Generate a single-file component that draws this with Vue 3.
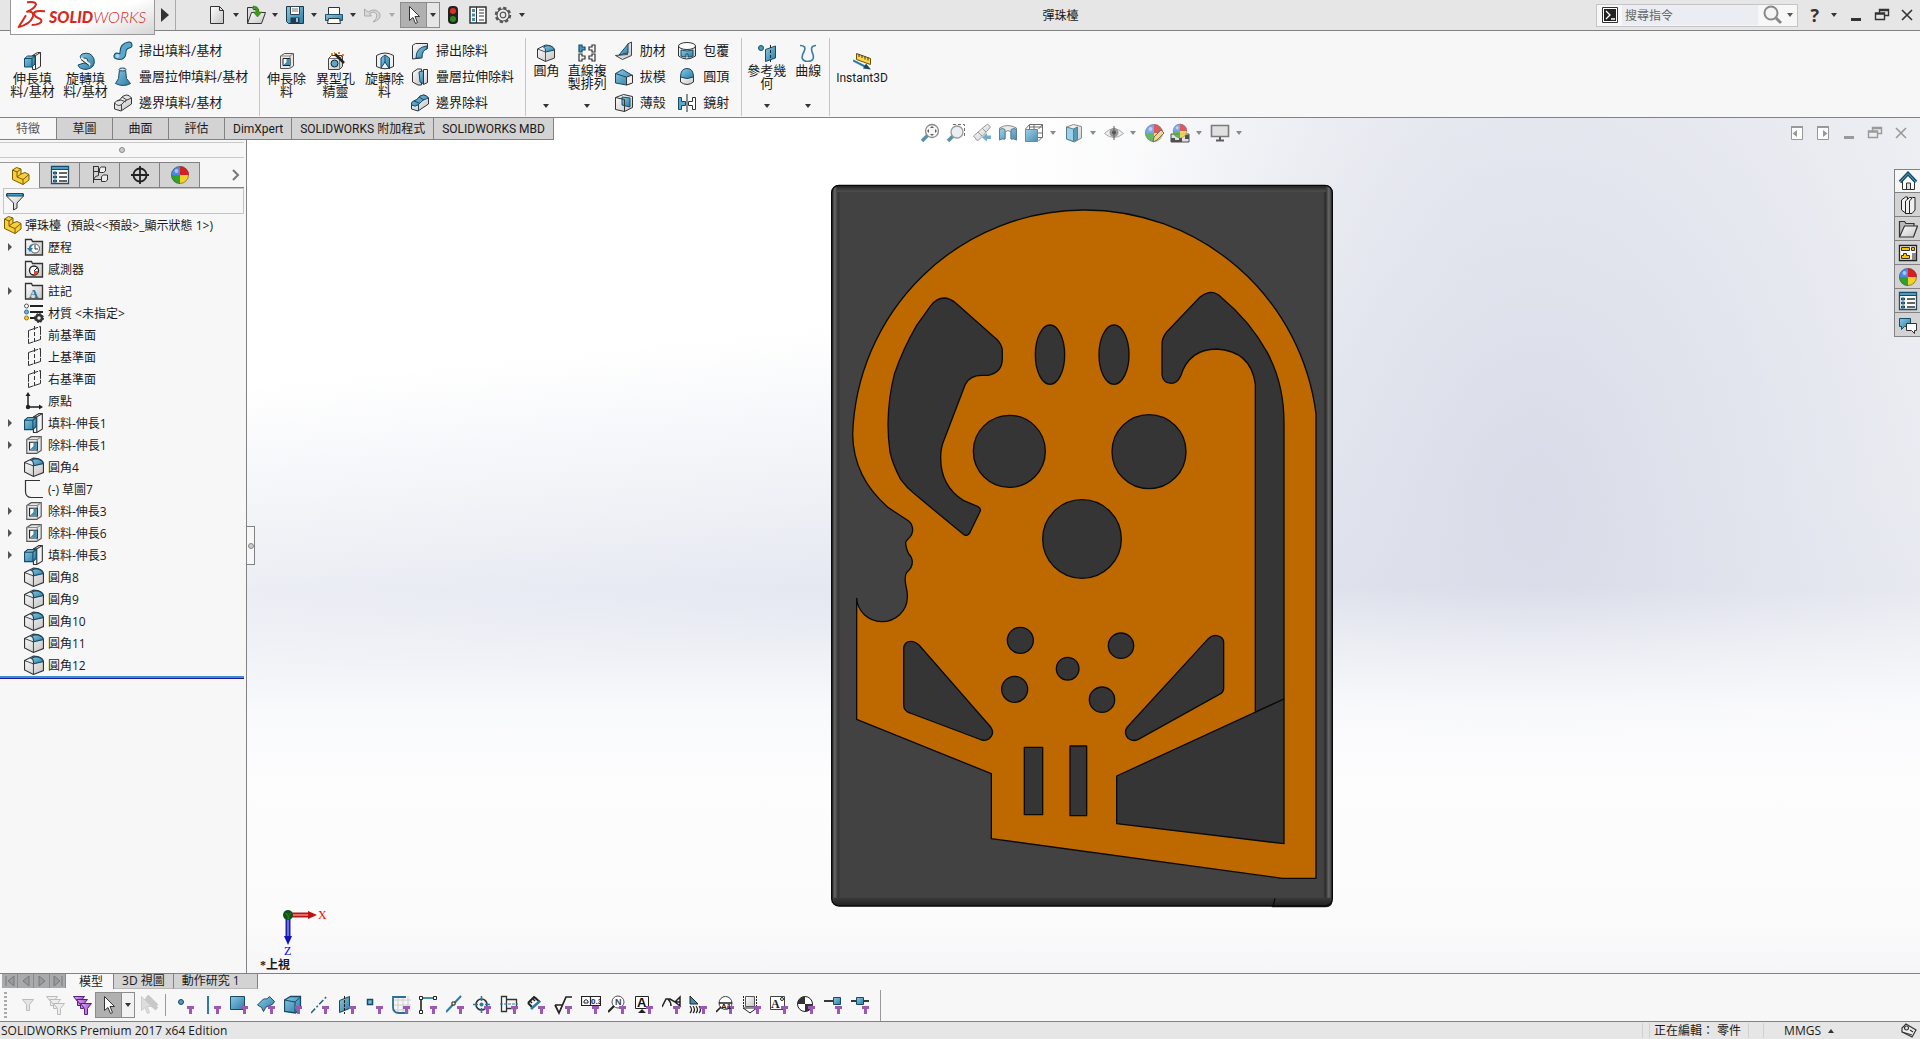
<script setup>
import { h } from 'vue'

// Lettering that sits on top of an icon: x, y, size, text, family
const serif = 'Liberation Serif, serif'
const sans = 'Liberation Sans, sans-serif'
const letters = {
  annot: [5, 17, 13, 'A', serif, '#2b6f94'],
  'f-tol': [10, 9, 8, '0.3', sans, '#222'],
  'f-note': [7, 10, 9, 'N', sans, '#444'],
  'f-datum': [2, 12, 13, 'A', sans, '#111'],
  'f-dtarget': [5, 14, 8, 'A1', sans, '#222'],
  'f-block': [1, 13, 12, 'A', serif, '#222'],
}

// Renders one symbol from the sprite at the end of the template
const Ic = (p) => {
  const t = letters[p.n]
  const kids = [h('use', { href: '#' + p.n })]
  if (t) kids.push(h('text', { x: t[0], y: t[1], 'font-size': t[2], 'font-family': t[4], 'font-weight': 700, fill: t[5] }, t[3]))
  return h('svg', { width: p.s || 18, height: p.s || 18, viewBox: '0 0 20 20', 'aria-hidden': 'true' }, kids)
}
Ic.props = ['n', 's']

const quick = [
  { n: 'new', t: '開新檔案' }, { n: 'open', t: '開啟' }, { n: 'save', t: '儲存' },
  { n: 'print', t: '列印' }, { n: 'undo', t: '復原', dim: true },
]

const ribbon = [
  {
    big: [{ n: 'boss', l: ['伸長填', '料/基材'] }, { n: 'revolve', l: ['旋轉填', '料/基材'] }],
    cols: [[{ n: 'sweep', l: '掃出填料/基材' }, { n: 'loft', l: '疊層拉伸填料/基材' }, { n: 'boundary', l: '邊界填料/基材' }]],
    c: 'g1',
  },
  {
    big: [{ n: 'cut', l: ['伸長除', '料'] }, { n: 'hole', l: ['異型孔', '精靈'] }, { n: 'revcut', l: ['旋轉除', '料'] }],
    cols: [[{ n: 'sweepcut', l: '掃出除料' }, { n: 'loftcut', l: '疊層拉伸除料' }, { n: 'boundcut', l: '邊界除料' }]],
    c: 'g2',
  },
  {
    big: [{ n: 'fillet', l: ['圓角'], d: 1 }, { n: 'pattern', l: ['直線複', '製排列'], d: 1 }],
    cols: [
      [{ n: 'rib', l: '肋材' }, { n: 'draft', l: '拔模' }, { n: 'shell', l: '薄殼' }],
      [{ n: 'wrap', l: '包覆' }, { n: 'dome', l: '圓頂' }, { n: 'mirror', l: '鏡射' }],
    ],
    c: 'g3',
  },
  { big: [{ n: 'refgeo', l: ['參考幾', '何'], d: 1 }, { n: 'curves', l: ['曲線'], d: 1 }], cols: [], c: 'g4' },
  { big: [{ n: 'instant', l: ['Instant3D'] }], cols: [], c: 'g5' },
]

const cmTabs = ['特徵', '草圖', '曲面', '評估', 'DimXpert', 'SOLIDWORKS 附加程式', 'SOLIDWORKS MBD']
const fmTabs = [
  { n: 'part', t: '特徵管理員' }, { n: 'props', t: '屬性' }, { n: 'config', t: '模型組態' },
  { n: 'target', t: 'DimXpert' }, { n: 'ball', t: '顯示' },
]

const tree = [
  { n: 'history', l: '歷程', a: 1 }, { n: 'sensor', l: '感測器' }, { n: 'annot', l: '註記', a: 1 },
  { n: 'material', l: '材質 <未指定>' }, { n: 'plane', l: '前基準面' }, { n: 'plane', l: '上基準面' },
  { n: 'plane', l: '右基準面' }, { n: 'origin', l: '原點' }, { n: 'boss', l: '填料-伸長1', a: 1 },
  { n: 'cut', l: '除料-伸長1', a: 1 }, { n: 'fillet', l: '圓角4' }, { n: 'sketch', l: '(-) 草圖7' },
  { n: 'cut', l: '除料-伸長3', a: 1 }, { n: 'cut', l: '除料-伸長6', a: 1 }, { n: 'boss', l: '填料-伸長3', a: 1 },
  { n: 'fillet', l: '圓角8' }, { n: 'fillet', l: '圓角9' }, { n: 'fillet', l: '圓角10' },
  { n: 'fillet', l: '圓角11' }, { n: 'fillet', l: '圓角12' },
]

const heads = [
  { n: 'zoomfit' }, { n: 'zoomarea' }, { n: 'prevview' }, { n: 'section' }, { n: 'orient', d: 1 },
  { n: 'display', d: 1 }, { n: 'eye', d: 1 }, { n: 'appear' }, { n: 'scene', d: 1 }, { n: 'monitor', d: 1 },
]
const docBtns = ['dockl', 'dockr', 'min', 'restore', 'close']
const winBtns = ['min', 'restore', 'close']
const tasks = ['home', 'library', 'folder', 'palette', 'ball', 'props', 'forum']
const filters = [
  'f-point', 'f-edge', 'f-face', 'f-surf', 'f-body', 'f-axis', 'f-plane', 'f-spt', 'f-sketch', 'f-seg', 'f-mid',
  'f-center', 'f-cline', 'f-dim', 'f-rough', 'f-tol', 'f-note', 'f-datum', 'f-weld', 'f-wsym', 'f-dtarget',
  'f-thread', 'f-block', 'f-com', 'f-conn', 'f-route',
]
</script>

<template>
  <div class="app">
    <header class="title">
      <div class="logo">
        <svg width="30" height="30" viewBox="0 0 90 90" fill="none" stroke="#d8281e" stroke-width="6" stroke-linejoin="round" aria-hidden="true">
          <path d="M33 7q26-4 27 6q-3 13-27 22q22-3 18 15q-10 24-43 31l22-35M87 34q-33-4-33 8q2 8 17 14q12 7-2 15q-8 4-22 4" />
        </svg>
        <span class="brand"><b>SOLID</b>WORKS</span>
      </div>
      <button class="fly" aria-label="功能表"><svg width="8" height="14"><path d="M0 0l8 7-8 7z" fill="#333" /></svg></button>
      <div class="quick">
        <div v-for="q in quick" :key="q.n" class="split" :class="{ dim: q.dim }">
          <button :aria-label="q.t"><Ic :n="q.n" s="20" /></button><i class="car"></i>
        </div>
        <div class="pick"><button aria-label="選擇"><Ic n="cursor" s="20" /></button><button aria-label="更多"><i class="car"></i></button></div>
        <button aria-label="重新計算"><Ic n="traffic" s="20" /></button>
        <button aria-label="檔案屬性"><Ic n="filelist" s="20" /></button>
        <button aria-label="選項"><Ic n="gear" s="20" /></button>
        <i class="car"></i>
      </div>
      <h1>彈珠檯</h1>
      <div class="tools">
        <div class="search">
          <Ic n="prompt" s="16" />
          <input type="text" placeholder="搜尋指令" aria-label="搜尋指令" />
          <Ic n="lens" s="20" /><i class="car"></i>
        </div>
        <button class="help">?</button><i class="car"></i>
        <button v-for="w in winBtns" :key="w" class="win" :aria-label="w"><Ic :n="w" s="16" /></button>
      </div>
    </header>

    <section class="ribbon">
      <div v-for="g in ribbon" :key="g.c" class="group" :class="g.c">
        <button v-for="b in g.big" :key="b.n" class="big" :class="{ drop: b.d }">
          <Ic :n="b.n" /><span v-for="t in b.l" :key="t">{{ t }}</span><i v-if="b.d" class="car"></i>
        </button>
        <div v-for="(c, i) in g.cols" :key="i" class="col">
          <button v-for="b in c" :key="b.n" class="small"><Ic :n="b.n" s="20" />{{ b.l }}</button>
        </div>
      </div>
    </section>

    <main class="work">
      <nav class="cmtabs">
        <button v-for="(t, i) in cmTabs" :key="t" :class="{ on: i === 0 }">{{ t }}</button>
      </nav>

      <aside class="panel">
        <div class="grip"><i></i></div>
        <div class="fmtabs">
          <button v-for="(t, i) in fmTabs" :key="t.n" :class="{ on: i === 0 }" :aria-label="t.t"><Ic :n="t.n" s="20" /></button>
          <span class="more"><svg width="8" height="12" fill="none" stroke="#777" stroke-width="2"><path d="M1 1l5 5-5 5" /></svg></span>
        </div>
        <label class="filter"><Ic n="funnel" s="20" /><input type="text" aria-label="篩選" /></label>
        <div class="root"><Ic n="part" s="20" /><span>彈珠檯&nbsp; (預設&lt;&lt;預設&gt;_顯示狀態 1&gt;)</span></div>
        <ul class="tree">
          <li v-for="(r, i) in tree" :key="i"><i :class="{ exp: r.a }"></i><Ic :n="r.n" s="20" /><span>{{ r.l }}</span></li>
        </ul>
        <div class="rollback"></div>
      </aside>

      <section class="view">
        <svg class="model" viewBox="33 39 1506 2172" role="img" aria-label="彈珠檯">
          <defs>
            <linearGradient id="mside"><stop offset="0" stop-color="#222" /><stop offset=".5" stop-color="#666" /><stop offset="1" stop-color="#333" /></linearGradient>
            <linearGradient id="mtop" x2="0" y2="1"><stop offset="0" stop-color="#1c1c1c" /><stop offset="1" stop-color="#4e4e4e" /></linearGradient>
            <linearGradient id="mbot" x2="0" y2="1"><stop offset="0" stop-color="#3a3a3a" /><stop offset="1" stop-color="#1e1e1e" /></linearGradient>
            <clipPath id="mclip"><rect x="35" y="42" width="1502" height="2164" rx="22" /></clipPath>
          </defs>
          <path d="M1358 2200h160q19 0 19-18v9q0 18-22 18h-160z" fill="#222" />
          <g clip-path="url(#mclip)">
            <path d="M35 42h1502v2164H35z" fill="#424242" />
            <path d="M54 62h5v2118h-5M1511 62h4v2118h-4z" fill="#373737" />
            <path d="M35 42h19v2164H35z" fill="url(#mside)" /><path d="M1515 42h22v2164h-22z" fill="url(#mside)" />
            <path d="M50 42h1468v20H50z" fill="url(#mtop)" /><path d="M40 2180h1492v26H40z" fill="url(#mbot)" />
            <path d="M1365 2182l-6 26" stroke="#000" stroke-width="3" />
          </g>
          <rect x="35" y="43" width="1502" height="2162" rx="22" fill="none" stroke="#080808" stroke-width="4" />
          <g stroke="#0a0a0a" stroke-width="4" stroke-linejoin="round">
            <path fill="#be6900" d="M98 790A696 696 0 0 1 790 117A700 700 0 0 1 1488 728V2122H1388L514 2003V1808L110 1645V1282A77 74 0 0 0 185 1352A77 74 0 0 0 262 1280Q263 1265 257 1240Q252 1213 262 1202Q277 1190 277 1172Q276 1158 266 1148Q260 1138 257 1118Q256 1112 264 1104Q278 1092 278 1076Q277 1058 266 1050L205 1010Q100 920 98 790z" />
            <g fill="#353535">
              <path d="M372 381Q350 382 333 403L290 463Q248 535 223 610Q205 680 204 760Q204 800 210 843Q218 880 242 925Q260 950 285 970L430 1090Q440 1098 449 1086L481 1020Q483 1013 474 1007L430 988Q362 945 362 860Q362 830 373 805L436 640Q450 613 485 613H505Q547 605 547 562V540Q546 520 530 505L408 397Q390 381 372 381z" />
              <path d="M1172 364Q1155 366 1140 378L1040 483Q1026 500 1026 520V612Q1030 637 1054 637Q1072 637 1082 615Q1107 534 1190 534Q1293 540 1306 640V1624L1392 1584V760Q1393 640 1342 545Q1290 450 1205 380Q1190 364 1172 364z" />
              <path d="M890 1815L1392 1584V2018L890 1958z" />
              <ellipse cx="690" cy="551" rx="44" ry="89" /><ellipse cx="882" cy="551" rx="45" ry="89" />
              <circle cx="568" cy="841" r="108" /><circle cx="987" cy="842" r="111" /><circle cx="786" cy="1104" r="118" />
              <circle cx="601" cy="1408" r="39" /><circle cx="903" cy="1424" r="38" /><circle cx="743" cy="1493" r="34" />
              <circle cx="584" cy="1555" r="39" /><circle cx="846" cy="1586" r="38" />
              <path d="M613 1729h55v202h-55zM750 1725h50v209h-50z" />
              <path d="M251 1435Q251 1411 273 1411Q285 1411 297 1422L512 1668Q520 1680 517 1690Q508 1712 485 1707L270 1626Q251 1620 251 1602z" />
              <path d="M1165 1403Q1175 1393 1187 1393Q1211 1396 1211 1415V1552Q1210 1565 1198 1570L955 1705Q938 1713 924 1702Q910 1685 922 1668z" />
            </g>
          </g>
        </svg>
        <div class="heads">
          <template v-for="b in heads" :key="b.n"><button :aria-label="b.n"><Ic :n="b.n" s="20" /></button><i v-if="b.d" class="car"></i></template>
        </div>
        <div class="docbtns"><button v-for="b in docBtns" :key="b" :aria-label="b"><Ic :n="b" s="16" /></button></div>
        <div class="tasks"><button v-for="(b, i) in tasks" :key="b" :class="{ on: i === 0 }" :aria-label="b"><Ic :n="b" s="20" /></button></div>
        <button class="handle" aria-label="收合"><i></i></button>
        <div class="triad">
          <svg width="46" height="48" aria-hidden="true">
            <path d="M8 6h20" stroke="#b01818" stroke-width="5" /><path d="M8 6h20" stroke="#e86a6a" stroke-width="2" /><path d="M26 2l9 4-9 4z" fill="#c01010" />
            <path d="M6 8v20" stroke="#2020a0" stroke-width="5" /><path d="M6 8v20" stroke="#6a6ae8" stroke-width="2" /><path d="M2 27l4 9 4-9z" fill="#1010c0" />
            <circle cx="6" cy="6" r="5" fill="#14501c" />
            <text x="3" y="10" fill="#1a9a1a" font-size="9" font-family="Liberation Serif, serif">Y</text>
            <text x="36" y="10" fill="#f00" font-size="12" font-family="Liberation Serif, serif">X</text>
            <text x="2" y="46" fill="#00f" font-size="12" font-family="Liberation Serif, serif">Z</text>
          </svg>
          <b>*上視</b>
        </div>
      </section>
    </main>

    <nav class="sheets">
      <div class="nav"><button v-for="n in ['first', 'prev', 'next', 'last']" :key="n" :aria-label="n"><Ic :n="n" s="12" /></button></div>
      <button class="on">模型</button><button>3D 視圖</button><button>動作研究 1</button>
    </nav>

    <section class="fbar">
      <i class="dots"></i>
      <button class="f1" aria-label="篩選"><Ic n="fun1" s="20" /></button>
      <button class="f1" aria-label="清除篩選"><Ic n="fun2" s="20" /></button>
      <button class="f1" aria-label="所有篩選"><Ic n="fun3" s="20" /></button>
      <div class="pick"><button aria-label="選擇"><Ic n="cursor" s="20" /></button><button aria-label="更多"><i class="car"></i></button></div>
      <button class="f1" aria-label="反轉選擇"><Ic n="inv" s="20" /></button>
      <i class="bar"></i>
      <div class="flist">
        <button v-for="f in filters" :key="f" :aria-label="f"><Ic :n="f" s="20" /></button>
      </div>
      <i class="bar end"></i>
    </section>

    <footer class="status">
      <span class="ed">SOLIDWORKS Premium 2017 x64 Edition</span>
      <span class="cell"></span>
      <span class="mode">正在編輯： 零件</span>
      <span class="cell wide"></span>
      <button class="unit">MMGS<i class="up"></i></button>
      <svg width="18" height="16" viewBox="0 0 18 16" fill="#eee" stroke="#333" stroke-width="1.2"><path d="M6 1l10 6-4 7L2 9V5z" /><circle cx="6.500" cy="5" r="2" /><path d="M10 7l3 2M2 9l10 3" /></svg>
    </footer>

    <svg class="sprite" aria-hidden="true">
      <defs>
        <linearGradient id="gb" x2="1" y2="1"><stop offset="0" stop-color="#8cc9e4" /><stop offset="1" stop-color="#2b7ca3" /></linearGradient>
        <linearGradient id="gg" x2="1" y2="1"><stop offset="0" stop-color="#fff" /><stop offset="1" stop-color="#c4c4c4" /></linearGradient>
        <linearGradient id="gf" x2="1"><stop offset="0" stop-color="#e0aaf5" /><stop offset="1" stop-color="#a050c8" /></linearGradient>
        <g id="fn"><path d="M11 11h7v3h-2v5h-3v-5h-2z" fill="#9b59b6" stroke="none" /></g>
      </defs>
      <!-- title bar -->
      <symbol id="new" viewBox="0 0 20 20"><path d="M3.500 1.500h9l4 4v13h-13z" fill="url(#gg)" stroke="#333" /><path d="M12.500 1.500v4h4" fill="none" stroke="#333" /></symbol>
      <symbol id="open" viewBox="0 0 20 20"><path d="M1.500 18.500v-16h5l1 2h5v4" fill="#ddd" stroke="#333" /><path d="M1.500 18.500l4-11h14l-4 11z" fill="url(#gg)" stroke="#333" /><path d="M7 1q6 0 6 6h3l-4.500 5L7 7h3q0-4-3-4z" fill="#3f9a1c" stroke="#2a6e10" stroke-width=".5" /></symbol>
      <symbol id="save" viewBox="0 0 20 20"><path d="M1.500 1.500h17v17h-15l-2-2z" fill="url(#gb)" stroke="#16394d" /><path d="M5.500 1.500h9v8h-9z" fill="#fff" stroke="#345" /><path d="M7 4h6M7 6h6" stroke="#777" /><path d="M5.500 12.500h9v6h-9z" fill="#1f3d4d" /><path d="M11 13h2v4h-2z" fill="#8cc9e4" /></symbol>
      <symbol id="print" viewBox="0 0 20 20"><path d="M4.500 2.500h11v7h-11z" fill="#fff" stroke="#333" /><path d="M1.500 9.500h17v6h-17z" fill="url(#gb)" stroke="#1c5270" /><path d="M4.500 13.500h11l1 5h-13z" fill="#fff" stroke="#333" /></symbol>
      <symbol id="undo" viewBox="0 0 20 20"><path d="M1.500 4v7h7L6.500 8.500Q12 5 14 10q0 4-4 7q8-2 7-8Q13 2 5 7z" fill="#d8d8d8" stroke="#aaa" /></symbol>
      <symbol id="cursor" viewBox="0 0 20 20"><path d="M5.500 1.500v14l3.500-3 2.500 6 2-1-2.500-6h4.500z" fill="#fff" stroke="#333" /></symbol>
      <symbol id="traffic" viewBox="0 0 20 20"><rect x="5" y="1" width="10" height="18" rx="4" fill="#222" /><circle cx="10" cy="6" r="3" fill="#e03020" /><circle cx="10" cy="14" r="3" fill="#2a8a20" /></symbol>
      <symbol id="filelist" viewBox="0 0 20 20"><path d="M2 2h16v16H2z" fill="#fff" stroke="#333" stroke-width="1.500" /><path d="M8.500 2v16M11 5h5M11 8h5M11 11h5M11 15h5" stroke="#333" /><path d="M4 4h3v3H4zM4 8.500h3v3H4zM4 13h3v3H4z" fill="#3f8fb5" /></symbol>
      <symbol id="gear" viewBox="0 0 20 20"><g fill="none" stroke="#555"><circle cx="10" cy="10" r="7" stroke-width="2.500" stroke-dasharray="3.200 2.300" /><circle cx="10" cy="10" r="6" fill="#f2f2f2" stroke-width="1.200" /><circle cx="10" cy="10" r="2.800" fill="#e6e6e6" stroke-width="1.200" /></g></symbol>
      <symbol id="prompt" viewBox="0 0 16 16"><path d="M.5.5h15v15H.5z" fill="#fff" stroke="#333" /><path d="M2 2h12v12H2z" fill="#222" /><path d="M4 4l4 4-4 4M9 12h4" fill="none" stroke="#fff" stroke-width="1.300" /></symbol>
      <symbol id="lens" viewBox="0 0 20 20"><circle cx="8" cy="8" r="6.500" fill="#f4f4f4" stroke="#888" stroke-width="2" /><path d="M13 13l5 5" stroke="#888" stroke-width="3" /></symbol>
      <symbol id="min" viewBox="0 0 16 16"><path d="M3 11h10v3H3z" fill="currentColor" /></symbol>
      <symbol id="restore" viewBox="0 0 16 16"><path d="M5.500 6V2.500h9v6h-4M1.500 6h9v6.500h-9zM1.500 7h9M5.500 3.500h9" fill="none" stroke="currentColor" stroke-width="1.400" /></symbol>
      <symbol id="close" viewBox="0 0 16 16"><path d="M3 3l10 10M13 3L3 13" stroke="currentColor" stroke-width="1.600" /></symbol>
      <symbol id="dockl" viewBox="0 0 16 16"><path d="M2.500 2v12.500h11V2z" fill="#fff" stroke="currentColor" /><path d="M2 1h12v2H2zM8 5v7L3.500 8.500z" fill="currentColor" /></symbol>
      <symbol id="dockr" viewBox="0 0 16 16"><path d="M2.500 2v12.500h11V2z" fill="#fff" stroke="currentColor" /><path d="M2 1h12v2H2zM8 5v7l4.500-3.500z" fill="currentColor" /></symbol>
      <!-- features -->
      <symbol id="boss" viewBox="0 0 18 18"><g stroke="#333" stroke-linejoin="round"><path d="M8.500 3.500l5-3h3v14l-5 3h-3z" fill="#f4f4f4" /><path d="M11.500 17V3.500l5-3M8.500 3.500h3" fill="none" /><path d="M.5 6.500l3-2.500h7.500v8l-3 3H.5z" fill="url(#gb)" stroke="#174a66" /><path d="M.5 6.500H8V15M8 6.500L11 4" fill="none" stroke="#174a66" /></g></symbol>
      <symbol id="cut" viewBox="0 0 18 18"><path d="M2.500 4l4-2.500h9v12.500l-4 2.500h-9z" fill="#e8e8e8" stroke="#555" /><path d="M2.500 4h9.500l3.500-2.500M12 4v12.500" fill="none" stroke="#888" /><path d="M5 6.500h7v7H5z" fill="#fff" stroke="#222" /><path d="M5.500 13l3-3V7H11.500v6z" fill="#3f8fb5" /></symbol>
      <symbol id="revolve" viewBox="0 0 18 18"><path d="M5 2Q14-1 17 7q2 9-8 10.500Q2 17 1 13l6-2q3 2 4-1Q11 6 8 6L4 7q-2-3 1-5z" fill="url(#gb)" stroke="#174a66" /><path d="M4 6l9 7" stroke="#eee" stroke-width="2.500" /><path d="M4 7.500l8 6" stroke="#222" /></symbol>
      <symbol id="sweep" viewBox="0 0 20 20"><path d="M4 15q6 2 6-4t6-7" fill="none" stroke="#174a66" stroke-width="7" stroke-linecap="round" /><path d="M4 15q6 2 6-4t6-7" fill="none" stroke="#5aa9cb" stroke-width="5" stroke-linecap="round" /><circle cx="4.500" cy="15" r="2" fill="#a7d6ea" /></symbol>
      <symbol id="loft" viewBox="0 0 20 20"><path d="M6.500 2.500q3-2 6 0l1 9 4 5q-7 4-15 0l3-5z" fill="url(#gb)" stroke="#1d4a60" /><ellipse cx="9.500" cy="2.500" rx="3.500" ry="1.500" fill="#cbe6f2" stroke="#1d4a60" /></symbol>
      <symbol id="boundary" viewBox="0 0 20 20"><path d="M1.500 10q2-3 5-3 3-5 7-5 3 0 5 3v6L8 18l-6.500-2z" fill="url(#gg)" stroke="#333" /><path d="M1.500 10q4 4 7 1.500 2-4 10-6.500M8.500 11v7M4 8l4-1 5 2M9 4l5 3" fill="none" stroke="#444" /></symbol>
      <symbol id="boundcut" viewBox="0 0 20 20"><path d="M1.500 10q2-3 5-3 3-5 7-5 3 0 5 3v6L8 18l-6.500-2z" fill="url(#gg)" stroke="#333" /><path d="M1.500 10q2-3 5-3 3-5 7-5 3 0 5 3-6 1-10 6.500-3 3-7 .5z" fill="url(#gb)" stroke="#174a66" /><path d="M8.500 11v7M4 8l5 2M9 4l5 3" fill="none" stroke="#174a66" /></symbol>
      <symbol id="hole" viewBox="0 0 18 18"><path d="M1.500 6.500l3-3h11v11l-3 3h-11z" fill="url(#gg)" stroke="#444" /><path d="M1.500 6.500h11v11M12.500 6.500l3-3" fill="none" stroke="#777" /><circle cx="7.500" cy="11.500" r="3.500" fill="#5aa9cb" stroke="#222" /><path d="M8 2l9 9" stroke="#222" stroke-width="2.500" /><path d="M4 1h2v2H4zM11 0h2v2h-2zM15 2h2v2h-2zM7 0h1v2H7z" fill="#e8821a" /></symbol>
      <symbol id="revcut" viewBox="0 0 18 18"><path d="M.5 3.500q8.500-5 17 0v11q-8.500 4.500-17 0z" fill="#f0f0f0" stroke="#333" /><path d="M5 6l4-3 4.500 3v11L9 10l-4 6z" fill="url(#gb)" stroke="#174a66" /><path d="M9 3v8" stroke="#174a66" /></symbol>
      <symbol id="sweepcut" viewBox="0 0 20 20"><path d="M2.500 4.500l3-2h12v5Q11 9 10.500 17l-8 1z" fill="url(#gg)" stroke="#333" /><path d="M6 17Q6 6 17 5v3q-5 1-5 9z" fill="url(#gb)" stroke="#174a66" /></symbol>
      <symbol id="loftcut" viewBox="0 0 20 20"><path d="M2.500 5.500l5-3.500h4v16H8l-5.500-3z" fill="url(#gg)" stroke="#333" /><path d="M9 5q4-2 5 0v12l-4-2z" fill="url(#gb)" stroke="#174a66" /><path d="M13.500 2.500h4v13l-4 2z" fill="url(#gg)" stroke="#333" /></symbol>
      <symbol id="fillet" viewBox="0 0 18 18"><path d="M.5 5l8-4q8 .5 9 5v8l-9 3.500-8-4z" fill="url(#gg)" stroke="#333" /><path d="M.5 5l8 3v9.500" fill="none" stroke="#333" stroke-width=".8" /><path d="M8.500 8Q9 4 6.500 3l4-1.500q6 .5 7 4.500z" fill="url(#gb)" stroke="#174a66" /></symbol>
      <symbol id="pattern" viewBox="0 0 18 18"><g fill="none" stroke="#333" stroke-width="1.200"><path d="M1 1h3v2h3v3H4v2H1z" fill="#4a9cc0" stroke="#174a66" /><path d="M17 1h-3v2h-3v3h3v2h3zM1 10h3v2h3v3H4v2H1zM17 10h-3v2h-3v3h3v2h3z" /></g></symbol>
      <symbol id="rib" viewBox="0 0 20 20"><path d="M1.500 14.500l12-1V3l4-2v13.500l-9 4z" fill="url(#gg)" stroke="#444" /><path d="M5 14L14 3v9z" fill="url(#gb)" stroke="#174a66" /></symbol>
      <symbol id="draft" viewBox="0 0 20 20"><path d="M1.500 6.500l7-4 10 6v7l-6 2.500-11-2z" fill="url(#gb)" stroke="#174a66" /><path d="M12.500 10l6-2v8l-6 2z" fill="#eee" stroke="#333" /><path d="M1.500 6.500L12 10" stroke="#174a66" /></symbol>
      <symbol id="shell" viewBox="0 0 20 20"><path d="M1.500 4.500l8-3 9 2v11l-8 4-9-2z" fill="url(#gg)" stroke="#333" /><path d="M8 4l8 1v9l-8-2z" fill="url(#gb)" stroke="#174a66" /><path d="M1.500 4.500l9 2v12" fill="none" stroke="#333" /></symbol>
      <symbol id="wrap" viewBox="0 0 20 20"><path d="M1.500 5v10q8 6 17 0V5z" fill="url(#gg)" stroke="#333" /><ellipse cx="10" cy="5" rx="8.500" ry="3.500" fill="#fff" stroke="#333" /><path d="M4 9q6 2 12 0v6q-3 1-5 1v-3H9v3q-3 0-5-1z" fill="url(#gb)" stroke="#174a66" /></symbol>
      <symbol id="dome" viewBox="0 0 20 20"><path d="M3.500 9v6q6.500 5 13 0V9z" fill="url(#gg)" stroke="#333" /><path d="M3.500 10q0-8.500 6.500-8.500t6.500 8.500q-6.500 3-13 0z" fill="url(#gb)" stroke="#174a66" /></symbol>
      <symbol id="mirror" viewBox="0 0 20 20"><path d="M1.500 4.500h3v4h4v4h-4v4h-3z" fill="#5aa9cb" stroke="#174a66" /><path d="M18.500 4.500h-3v4h-4v4h4v4h3z" fill="#fff" stroke="#333" /><path d="M10 1v18" stroke="#222" /></symbol>
      <symbol id="refgeo" viewBox="0 0 18 18"><circle cx="3" cy="4" r="2.500" fill="#4a9cc0" stroke="#174a66" /><path d="M7.500 5.500l10-3.500v12l-10 3.500z" fill="url(#gb)" stroke="#174a66" /><path d="M12.500 1v17" stroke="#222" stroke-dasharray="3 2" /></symbol>
      <symbol id="curves" viewBox="0 0 18 18"><path d="M1 1.500q7 0 4 6-5 9 3 10 8 0 6-7-4-9 3-9" fill="none" stroke="#3a7fa3" stroke-width="1.600" /></symbol>
      <symbol id="instant" viewBox="0 0 18 18"><path d="M3.500 1.500l14 5v6l-14-5z" fill="#ffd54a" stroke="#6a5200" /><path d="M6 2v3M9 3v3M12 4.500v3M15 5.500v3" stroke="#333" /><path d="M0 8.500l12 6" stroke="#2b7ca3" stroke-width="2" /><path d="M10 16.500l8 1-5-6z" fill="#174a66" /></symbol>
      <!-- feature manager -->
      <symbol id="part" viewBox="0 0 20 20"><path d="M2.500 4l4-2.500L11 3v5l4-1.500 4 2V14l-6 4.500-10.500-5z" fill="#f7cf3c" stroke="#7a5c00" /><path d="M2.500 4L7 6v5l6 2.500v5M7 6l4-3M7 11l4-3M13 13.500l6-5" fill="none" stroke="#7a5c00" /></symbol>
      <symbol id="props" viewBox="0 0 20 20"><path d="M1.500 1.500h17v17h-17z" fill="#fff" stroke="#2b4a5e" stroke-width="1.300" /><path d="M1.500 1.500h17v3h-17z" fill="#4a9cc0" stroke="#174a66" /><path d="M9 8h8M9 12h8M9 16h8" stroke="#333" stroke-width="1.300" /><path d="M3.500 7h3v2h-3zM3.500 11h3v2h-3zM3.500 15h3v2h-3z" fill="#3f8fb5" stroke="#174a66" /></symbol>
      <symbol id="config" viewBox="0 0 20 20"><g fill="#eee" stroke="#333"><path d="M3.500 1v17M3.500 14.500h8M3.500 6.500h5" /><path d="M3.500 1.500h5v9l-3 1-2 3z" fill="none" /><path d="M9.500 3.500l2-1.500h4v4l-2 1.500h-4zM11.500 11.500l2-1.500h4v5l-2 1.500h-4z" /></g></symbol>
      <symbol id="target" viewBox="0 0 20 20"><circle cx="10" cy="10" r="6.500" fill="none" stroke="#222" stroke-width="1.800" /><path d="M10 1v18M1 10h18" stroke="#222" stroke-width="1.800" /></symbol>
      <symbol id="ball" viewBox="0 0 20 20"><path d="M10 10V1a9 9 0 0 0-9 9z" fill="#4a8ae8" /><path d="M10 10h9a9 9 0 0 0-9-9z" fill="#d81e1e" /><path d="M10 10H1a9 9 0 0 0 9 9z" fill="#2da32a" /><path d="M10 10h9a9 9 0 0 1-9 9z" fill="#f2cf2a" /><circle cx="10" cy="10" r="8.500" fill="none" stroke="#555" stroke-opacity=".6" /><circle cx="6.500" cy="6" r="2" fill="#fff" opacity=".5" /></symbol>
      <symbol id="funnel" viewBox="0 0 20 20"><path d="M1.500 3h17v2l-6.500 7v5l-3.500 2v-7L1.500 5z" fill="url(#gg)" stroke="#333" /><path d="M2 2.500h16v2.500H2z" fill="#4a9cc0" stroke="#174a66" /></symbol>
      <symbol id="fold" viewBox="0 0 20 20"><path d="M1.500 18V2.500h6l1 2h10V18z" fill="url(#gg)" stroke="#333" stroke-width="1.300" /></symbol>
      <symbol id="history" viewBox="0 0 20 20"><use href="#fold" /><circle cx="11" cy="11.500" r="4.500" fill="#fff" stroke="#555" /><path d="M11 8v4h3" fill="none" stroke="#333" /><path d="M3 11l3 4 3-4H7q0-3 3-4-5 0-5 4z" fill="#2b7ca3" /></symbol>
      <symbol id="sensor" viewBox="0 0 20 20"><use href="#fold" /><circle cx="10" cy="11.500" r="4.500" fill="#fff" stroke="#222" stroke-width="1.300" /><path d="M10 12l3-3" stroke="#222" /><path d="M10 12h4q0 4-4 4z" fill="#e04a2a" /></symbol>
      <symbol id="annot" viewBox="0 0 20 20"><use href="#fold" /></symbol>
      <symbol id="material" viewBox="0 0 20 20"><path d="M6 3h13M6 9h13M6 15h6" stroke="#222" stroke-width="2" /><circle cx="2.500" cy="3" r="2" fill="#fff" stroke="#555" /><circle cx="2.500" cy="9" r="2" fill="#6ab8dc" stroke="#2b6f94" /><circle cx="2.500" cy="15" r="2" fill="#ffc93c" stroke="#a07800" /><circle cx="15" cy="15" r="3" fill="none" stroke="#333" stroke-width="2.500" /><circle cx="15" cy="15" r="4.500" fill="none" stroke="#333" stroke-dasharray="2 1.500" /></symbol>
      <symbol id="plane" viewBox="0 0 20 20"><path d="M4.500 5.500l12-4v13l-12 4z" fill="none" stroke="#333" stroke-dasharray="10 1" /><path d="M10.500 1v17" stroke="#333" stroke-dasharray="4 2" /></symbol>
      <symbol id="origin" viewBox="0 0 20 20"><path d="M4 3v13h12" fill="none" stroke="#222" stroke-width="1.500" /><path d="M1.500 5L4 1l2.500 4zM15 13.500l4 2.500-4 2.500z" fill="#222" /><circle cx="4" cy="16" r="2.200" fill="#222" /></symbol>
      <symbol id="sketch" viewBox="0 0 20 20"><path d="M16 1.500H1.500v11q0 6 6 6H19" fill="none" stroke="#333" stroke-width="1.200" /></symbol>
      <!-- view toolbar -->
      <symbol id="zoomfit" viewBox="0 0 20 20"><path d="M8 12l-6 6" stroke="#3a7fa3" stroke-width="3.500" /><circle cx="12" cy="8" r="6.500" fill="#f5f5f5" stroke="#777" stroke-width="1.300" /><path d="M12 3l2 2h-4zM12 13l2-2h-4zM7 8l2-2v4zM17 8l-2-2v4z" fill="#444" /></symbol>
      <symbol id="zoomarea" viewBox="0 0 20 20"><path d="M7 1.500h11.500v12" fill="none" stroke="#555" stroke-dasharray="3 2" /><path d="M8 12l-6 6" stroke="#3a7fa3" stroke-width="3.500" /><circle cx="11" cy="9" r="6" fill="#e6eef4" stroke="#888" stroke-width="1.300" /></symbol>
      <symbol id="prevview" viewBox="0 0 20 20"><path d="M1.500 13l8-7 6-5 3 3-6 7-7 7z" fill="url(#gg)" stroke="#888" /><path d="M10 5l4 4M6 9l4 4" stroke="#888" /><path d="M19 12.500h-4V10l-5 4.500 5 4V16h4z" fill="#5aa0c0" /></symbol>
      <symbol id="section" viewBox="0 0 20 20"><path d="M1.500 5q8-5 17 0v12q-3-2-5.500-1V9q-3-3-6 0v7q-3-1-5.500 1z" fill="#e8e8e8" stroke="#777" /><path d="M1.500 6.500q3-2 5.500 0v9.500q-3-1-5.500 1zM13 6.500q3-2 5.500 0V17q-3-2-5.500-1z" fill="url(#gb)" stroke="#3a6a85" /></symbol>
      <symbol id="orient" viewBox="0 0 20 20"><path d="M5.500 6V1.500h13v13H14M10 1.500V6M5.500 4h13M14 10h4.500M1.500 6l4-4.500M14.500 6l4-4.500M14.500 18l4-4" fill="none" stroke="#555" /><path d="M1.500 6.500h12v12h-12z" fill="url(#gb)" stroke="#3a7fa3" /></symbol>
      <symbol id="display" viewBox="0 0 20 20"><path d="M2.500 4l7-2.500 8 2V15l-7 4-8-3z" fill="url(#gg)" stroke="#777" /><path d="M2.500 4l7 2v12.500l-7-2.500z" fill="#8cc9e4" stroke="#3a6a85" /><path d="M9.500 6l4-2v12.500l-4 2z" fill="#3a8ab0" stroke="#3a6a85" /></symbol>
      <symbol id="eye" viewBox="0 0 20 20"><path d="M.5 10.500q9.500-10 19 0-9.500 8-19 0z" fill="#eee" stroke="#999" /><circle cx="10" cy="9.500" r="4.500" fill="#888" /><circle cx="10" cy="9.500" r="2" fill="#333" /><path d="M10 3v14" stroke="#444" /></symbol>
      <symbol id="appear" viewBox="0 0 20 20"><use href="#ball" opacity=".85" /><path d="M9 19l1-5 7-7 3 3-7 7z" fill="#f7cf6c" stroke="#555" /></symbol>
      <symbol id="scene" viewBox="0 0 20 20"><path d="M1 11h18v8H1z" fill="#ddd" stroke="#333" /><path d="M1 15h4v4H1zM9 15h3v4H9zM15 12h4v4h-4zM5 17h4v2H5z" fill="#333" /><use href="#ball" x="2" y="0" width="16" height="16" opacity=".85" /></symbol>
      <symbol id="monitor" viewBox="0 0 20 20"><path d="M1.500 2.500h17v11h-17z" fill="#ddd" stroke="#666" stroke-width="1.600" /><path d="M10 14v3M6 17.500h8" stroke="#444" stroke-width="2" /></symbol>
      <!-- task pane -->
      <symbol id="home" viewBox="0 0 20 20"><path d="M4.500 9v9.500h12V9L10 4z" fill="#fff" stroke="#333" /><path d="M8.500 18v-6h4v6" fill="#ddd" stroke="#333" /><path d="M2 11l8-8.500 8 8.500" fill="none" stroke="#174a66" stroke-width="3.500" /><path d="M2 11l8-8.500 8 8.500" fill="none" stroke="#5aa9cb" stroke-width="1" /></symbol>
      <symbol id="library" viewBox="0 0 20 20"><g fill="#f0f0f0" stroke="#222"><path d="M3.500 5l4-3h2v15l-2 1-4-3z" /><path d="M7.500 6l4-3.500h2V17l-2 1.500h-4z" /><path d="M11.500 6l3-3.500h2.500V15l-3 3.500h-2.500z" /></g></symbol>
      <symbol id="folder" viewBox="0 0 20 20"><path d="M1.500 18V2.500h5l1.500 2h8V8" fill="#bbb" stroke="#333" stroke-width="1.200" /><path d="M1.500 18l5-11h13l-4 11z" fill="url(#gg)" stroke="#333" stroke-width="1.200" /></symbol>
      <symbol id="palette" viewBox="0 0 20 20"><path d="M1.500 2.500h17v15h-17z" fill="#fff" stroke="#222" stroke-width="1.300" /><path d="M3.500 4.500h8v3h-8zM13.500 4.500h3v3h-3zM5.500 10.500h3v2h3v3h-8v-3h2z" fill="#ffc400" stroke="#333" /><path d="M14 10h4v7h-4z" fill="#888" /></symbol>
      <symbol id="forum" viewBox="0 0 20 20"><path d="M1.500 3.500h11v8h-6l-3 3v-3h-2z" fill="url(#gb)" stroke="#174a66" /><path d="M8.500 8.500h10v7h-2v3l-3-3h-5z" fill="#fff" stroke="#333" /></symbol>
      <!-- sheet navigation -->
      <symbol id="first" viewBox="0 0 12 12"><path d="M2 1v10M10 1v10L4 6z" fill="#9a9a9c" stroke="#77787a" /></symbol>
      <symbol id="prev" viewBox="0 0 12 12"><path d="M9 1v10L3 6z" fill="#9a9a9c" stroke="#77787a" /></symbol>
      <symbol id="next" viewBox="0 0 12 12"><path d="M3 1v10l6-5z" fill="#9a9a9c" stroke="#77787a" /></symbol>
      <symbol id="last" viewBox="0 0 12 12"><path d="M10 1v10M2 1v10l6-5z" fill="#9a9a9c" stroke="#77787a" /></symbol>
      <!-- selection filters -->
      <symbol id="fun1" viewBox="0 0 20 20"><path d="M4.500 4.500h11l-4 5v6h-3v-6z" fill="#e4e4e4" stroke="#bbb" /></symbol>
      <symbol id="fun2" viewBox="0 0 20 20"><g fill="#eee" stroke="#bbb"><path d="M1.500 1.500h11l-4 5v4h-3v-4z" /><path d="M4.500 4.500h11l-4 5v4h-3v-4z" /><path d="M8.500 8.500h11l-4 5v6h-3v-6z" /></g></symbol>
      <symbol id="fun3" viewBox="0 0 20 20"><g fill="url(#gf)" stroke="#5a2080"><path d="M1.500 1.500h11l-4 5v4h-3v-4z" /><path d="M4.500 4.500h11l-4 5v4h-3v-4z" /><path d="M8.500 8.500h11l-4 5v6h-3v-6z" /></g></symbol>
      <symbol id="inv" viewBox="0 0 20 20"><path d="M8 1l10 10M6 4l12 10" stroke="#c8c8c8" stroke-width="4" /><path d="M2.500 1.500v14l3.500-3 2.500 6 2-1-2.500-6h4.500z" fill="#ddd" stroke="#ccc" /></symbol>
      <symbol id="f-point" viewBox="0 0 20 20"><circle cx="5" cy="7" r="2.500" fill="#4a9cc0" stroke="#174a66" /><use href="#fn" /></symbol>
      <symbol id="f-edge" viewBox="0 0 20 20"><path d="M5 1v18" stroke="#2b7ca3" stroke-width="2" /><use href="#fn" /></symbol>
      <symbol id="f-face" viewBox="0 0 20 20"><path d="M.5 1.500h14v13H.5z" fill="url(#gb)" stroke="#174a66" /><use href="#fn" /></symbol>
      <symbol id="f-surf" viewBox="0 0 20 20"><path d="M.5 10l6-6q4 1 6-2.500l5 5q-2 4-5 4-4 0-6 6-1-5-6-6.500z" fill="url(#gb)" stroke="#174a66" /><use href="#fn" /></symbol>
      <symbol id="f-body" viewBox="0 0 20 20"><path d="M.5 5l6-3.500h10V13l-5 5-11-1.500z" fill="url(#gb)" stroke="#174a66" stroke-width="1.300" /><path d="M.5 5L11 7v10M11 7l5.500-5" fill="none" stroke="#174a66" /><use href="#fn" /></symbol>
      <symbol id="f-axis" viewBox="0 0 20 20"><path d="M0 18L16 1" stroke="#2b5f7c" stroke-width="1.500" stroke-dasharray="6 2 2 2" /><use href="#fn" /></symbol>
      <symbol id="f-plane" viewBox="0 0 20 20"><path d="M1.500 5.500l10-4v12l-10 4z" fill="url(#gb)" stroke="#174a66" /><path d="M6.500 1v18" stroke="#222" stroke-dasharray="3 1" /><use href="#fn" /></symbol>
      <symbol id="f-spt" viewBox="0 0 20 20"><path d="M2.500 4.500h5v5h-5z" fill="#6ab8dc" stroke="#174a66" stroke-width="1.500" /><use href="#fn" /></symbol>
      <symbol id="f-sketch" viewBox="0 0 20 20"><path d="M0 5h19M0 10h19M0 15h19M6 1v18M11 1v18M16 1v18" stroke="#ccc" /><path d="M14 2H1v10q0 6 6 6h8" fill="none" stroke="#2b6f94" stroke-width="1.800" /><use href="#fn" /></symbol>
      <symbol id="f-seg" viewBox="0 0 20 20"><path d="M2 16V3h14" fill="none" stroke="#222" stroke-width="1.600" /><path d="M3 3h12" stroke="#3f8fb5" stroke-width="2" /><path d="M.5 1.500h3v3h-3zM14.500 1.500h3v3h-3zM.5 15.500h3v3h-3z" fill="#fff" stroke="#222" /><use href="#fn" /></symbol>
      <symbol id="f-mid" viewBox="0 0 20 20"><path d="M0 17L15 1" stroke="#2b7ca3" stroke-width="2" /><path d="M6 7h3v3H6z" fill="#fff" stroke="#222" /><use href="#fn" /></symbol>
      <symbol id="f-center" viewBox="0 0 20 20"><g transform="translate(-1 0)"><circle cx="9.500" cy="9.500" r="5.500" fill="none" stroke="#333" stroke-width="1.600" /><circle cx="9.500" cy="9.500" r="2" fill="#2b7ca3" /><path d="M9.500 1v5M9.500 13v5M1 9.500h5M13 9.500h5" stroke="#2b7ca3" stroke-width="1.600" /></g><use href="#fn" /></symbol>
      <symbol id="f-cline" viewBox="0 0 20 20"><path d="M1.500 1.500h5v15h-5zM6.500 4.500h10v9h-10" fill="none" stroke="#333" stroke-width="1.300" /><path d="M0 9h18" stroke="#2b7ca3" stroke-dasharray="3 1" /><use href="#fn" /></symbol>
      <symbol id="f-dim" viewBox="0 0 20 20"><path d="M1 8l6-6 3 2M1 8l4 4M7 2l6 5" stroke="#222" stroke-width="2" fill="none" /><path d="M3 6l2 2M6 4l2 2" stroke="#222" stroke-width="1.500" /><path d="M4 14l9-8" stroke="#2b7ca3" stroke-width="2.500" /><use href="#fn" /></symbol>
      <symbol id="f-rough" viewBox="0 0 20 20"><path d="M1 10h7M1 10l4 8 7-16h6" fill="none" stroke="#222" stroke-width="1.700" /><use href="#fn" /></symbol>
      <symbol id="f-tol" viewBox="0 0 20 20"><path d="M.5 1.500h19v9H.5zM9.500 1.500v9" fill="#fff" stroke="#222" stroke-width="1.200" /><path d="M3 8V6q2-3 4 0v2z" fill="none" stroke="#222" /><use href="#fn" /></symbol>
      <symbol id="f-note" viewBox="0 0 20 20"><circle cx="10" cy="7" r="6" fill="#fff" stroke="#555" /><path d="M6 11l-6 6" stroke="#222" stroke-width="2.200" /><use href="#fn" /></symbol>
      <symbol id="f-datum" viewBox="0 0 20 20"><path d="M.5 1.500h13v12H.5z" fill="#fff" stroke="#222" /><path d="M3 18l4-4 4 4z" fill="#222" /><use href="#fn" /></symbol>
      <symbol id="f-weld" viewBox="0 0 20 20"><path d="M0 12l4-8h4l5 3h5M6 4q3 3 3 7M13 7l5-5v9z" fill="none" stroke="#222" stroke-width="1.500" /><use href="#fn" /></symbol>
      <symbol id="f-wsym" viewBox="0 0 20 20"><path d="M1 1v8h8z" fill="#3f8fb5" stroke="#222" /><path d="M1 11q3 4 0 7M4 11q3 4 0 7M7 11q3 4 0 7M10 11q3 4 0 7" fill="none" stroke="#222" stroke-width="1.200" /><use href="#fn" /></symbol>
      <symbol id="f-dtarget" viewBox="0 0 20 20"><circle cx="9.500" cy="8" r="6.500" fill="#fff" stroke="#444" /><path d="M3 8h13M5 12l-5 5" stroke="#222" stroke-width="1.600" /><use href="#fn" /></symbol>
      <symbol id="f-thread" viewBox="0 0 20 20"><path d="M.5 1v12M13.500 1v12" stroke="#222" stroke-dasharray="2 1" /><path d="M2.500 1.500h9v10h-9z" fill="url(#gg)" stroke="#555" /><path d="M0 13h14l-3 2-4 3-4-3z" fill="#fff" stroke="#222" /><use href="#fn" /></symbol>
      <symbol id="f-block" viewBox="0 0 20 20"><path d="M.5 1.500h14v13H.5z" fill="#fff" stroke="#444" /><circle cx="12" cy="4" r="1.500" fill="none" stroke="#222" /><use href="#fn" /></symbol>
      <symbol id="f-com" viewBox="0 0 20 20"><circle cx="8" cy="9" r="7.500" fill="#fff" stroke="#222" /><path d="M8 9V1.500A7.500 7.500 0 0 0 .5 9zM8 9v7.500A7.500 7.500 0 0 0 15.500 9z" fill="#333" /><use href="#fn" /></symbol>
      <symbol id="f-conn" viewBox="0 0 20 20"><path d="M0 6h10" stroke="#222" stroke-width="1.800" /><path d="M9.500 2.500h7v7h-7z" fill="url(#gb)" stroke="#174a66" /><use href="#fn" /></symbol>
      <symbol id="f-route" viewBox="0 0 20 20"><path d="M0 6h18" stroke="#222" stroke-width="1.800" /><path d="M5.500 2.500h7v7h-7z" fill="url(#gb)" stroke="#174a66" /><use href="#fn" /></symbol>
    </svg>
  </div>
</template>

<style>
body { margin: 0; }
</style>

<style scoped>
.app {
  display: flex; flex-direction: column; height: 100vh; overflow: hidden;
  background: #f7f7f7; color: #1a1a1a;
  font: 12px/16px "Open Sans", "Noto Sans CJK TC", sans-serif;
}
button { border: 0; padding: 0; margin: 0; background: none; font: inherit; color: inherit; display: flex; align-items: center; justify-content: center; }
input { border: 0; padding: 0; min-width: 0; font: inherit; outline: 0; background: none; }
svg { display: block; flex: none; }
.car { flex: none; border: 3px solid transparent; border-top: 4px solid #333; border-bottom: 0; width: 0; height: 0; }
.sprite { position: absolute; width: 0; height: 0; }

.title { display: flex; align-items: center; height: 30px; flex: none; background: #e6e6e6; border-bottom: 1px solid #828282; }
.logo { display: flex; align-items: center; gap: 3px; box-sizing: border-box; width: 145px; height: 35px; margin-left: 10px; align-self: flex-start; padding: 0 0 4px 5px; border: 1px solid #999; border-top: 0; background: linear-gradient(160deg, #fff 55%, #d6d6d6); z-index: 2; }
.brand { color: #d8281e; font: italic 300 16px/20px Lato, sans-serif; padding-top: 4px; }
.brand b { font-weight: 900; }
.fly { width: 21px; height: 30px; border-right: 1px solid #aaa; }
.quick { display: flex; align-items: center; margin-left: 31px; }
.split { display: flex; align-items: center; gap: 6px; width: 39px; }
.quick > button { width: 25px; }
.dim .car { border-top-color: #aaa; }
.pick { display: flex; box-sizing: border-box; height: 26px; border: 1px solid #8c8c8c; }
.pick button:first-child { width: 25px; background: #b0b0b0; }
.pick button:last-child { width: 13px; border-left: 1px solid #8c8c8c; background: #f2f2f2; }
.quick .pick { margin-left: -2px; }
.quick .pick button:last-child { background: #e6e6e6; }
.quick > .car { margin-left: 4px; }
h1 { flex: 1; margin: 0; font: inherit; text-align: center; padding-top: 2px; }
.tools { display: flex; align-items: center; width: 324px; color: #333; }
.search { display: flex; align-items: center; box-sizing: border-box; width: 202px; height: 23px; padding: 0 4px 0 5px; border: 1px solid #c4c4c4; background: #f7f7f7; }
.search input { width: 133px; height: 20px; margin: 0 5px 0 4px; padding-left: 3px; background: #ebedf2; }
.search input::placeholder { color: #666; opacity: 1; }
.search .car { margin-left: 4px; border-top-color: #555; }
.help { width: 34px; font: 700 18px/24px "Open Sans", sans-serif; }
.help + .car { margin-right: 6px; }
.win { width: 26px; }

.ribbon { display: flex; align-items: center; box-sizing: border-box; height: 87px; padding-top: 5px; flex: none; border-bottom: 1px solid #828282; }
.group { display: flex; align-items: center; height: 78px; box-sizing: border-box; border-right: 1px solid #c6c6c6; }
.big { flex-direction: column; justify-content: flex-start; width: 49px; height: 78px; padding-top: 14px; line-height: 13px; white-space: nowrap; position: relative; }
.big svg { margin-bottom: 2px; }
.big.drop { padding-top: 6px; }
.big .car { position: absolute; bottom: 8px; }
.col { display: flex; flex-direction: column; height: 78px; justify-content: space-between; }
.small { gap: 6px; height: 26px; justify-content: flex-start; white-space: nowrap; }
.small, .big { font-size: 13px; font-family: Roboto, "Noto Sans CJK TC", sans-serif; }
.g1 { width: 260px; padding-left: 6px; }
.g1 .big { width: 53px; }
.g2 { width: 266px; padding-left: 2px; }
.g1 .col, .g2 .col { margin-left: 1px; }
.g3 { width: 216px; }
.g3 .big { width: 41px; }
.g3 .big + .col { margin-left: 6px; }
.g3 .col { width: 64px; }
.g4 { width: 88px; padding-left: 4px; }
.g4 .big { width: 43px; }
.g5 { border: 0; padding-left: 4px; }
.g5 .big { width: 56px; font-size: 12px; }

.work { flex: 1; min-height: 0; display: grid; grid-template: 22px 1fr / 247px 1fr; }
.cmtabs { grid-area: 1 / 1 / 2 / 3; justify-self: start; display: flex; z-index: 2; background: #d3d3d3; border-bottom: 1px solid #828282; border-right: 1px solid #828282; font-family: Roboto, "Noto Sans CJK TC", sans-serif; }
.cmtabs button { box-sizing: border-box; min-width: 56px; padding: 0 8px; border-left: 1px solid #828282; white-space: nowrap; }
.cmtabs .on { background: #f7f7f7; color: #555; border-left: 0; }

.panel { grid-area: 2 / 1; display: flex; flex-direction: column; border-right: 1px solid #828282; padding-right: 2px; }
.grip { height: 14px; margin: 2px 0 4px; border: 1px solid #c9c9c9; border-width: 1px 0; display: flex; align-items: center; justify-content: center; }
.grip i, .handle i { width: 4px; height: 4px; border: 1px solid #888; border-radius: 50%; background: #ccc; }
.fmtabs { display: flex; height: 26px; }
.fmtabs button { box-sizing: border-box; width: 40px; border: 1px solid #828282; border-left-width: 0; background: #d3d3d3; }
.fmtabs .on { background: #f7f7f7; border-bottom: 0; border-top-color: #999; }
.more { flex: 1; display: flex; align-items: center; justify-content: flex-end; padding-right: 4px; border-bottom: 1px solid #828282; }
.filter { display: flex; align-items: center; height: 24px; margin-left: 3px; padding-left: 1px; border: 1px solid #c4c4c4; }
.filter input { flex: 1; }
.root { display: flex; align-items: center; gap: 3px; height: 22px; padding-left: 2px; white-space: nowrap; }
.tree { list-style: none; margin: 0; padding: 0; }
.tree li { display: flex; align-items: center; height: 22px; padding-left: 8px; }
.tree i { width: 0; height: 0; border: 4px solid transparent; border-right: 0; margin-right: 12px; }
.tree .exp { border-left-color: #555; }
.tree span { margin-left: 4px; }
.tree span, .root span { padding-top: 2px; }
.rollback { height: 2px; background: #3a8fd0; border-bottom: 1px solid #2018a0; }

.view {
  grid-area: 1 / 2 / 3 / 3; position: relative; display: flex; align-items: center; justify-content: center; min-width: 0; min-height: 0; overflow: hidden; padding-right: 4px;
  background:
    linear-gradient(180deg, rgba(253,253,254,0) 55%, rgba(253,253,254,.4) 61%, rgba(253,253,254,.85) 69%, #fdfdfe 78%, #fbfbfc 94%, #f6f6f8 100%),
    radial-gradient(ellipse 28% 80% at 77% 45%, #d9dce8 0%, rgba(221,224,235,.7) 45%, rgba(225,229,238,0) 100%),
    radial-gradient(ellipse 55% 90% at 100% 0%, #eeeff3 0%, rgba(238,239,243,.9) 50%, rgba(238,239,243,0) 100%),
    linear-gradient(174deg, #fff 26%, #eff1f6 42%, #e0e4ee 56%);
}
.model { width: 502px; height: 724px; }
.heads { position: absolute; top: 5px; display: flex; align-items: center; opacity: .85; }
.heads button { width: 26px; }
.heads .car { margin: 0 5px 0 3px; border-top-color: #777; }
.docbtns { position: absolute; top: 7px; right: 6px; display: flex; color: #999; }
.docbtns button { width: 26px; }
.tasks { position: absolute; top: 51px; right: 0; width: 25px; border: 1px solid #828282; border-width: 1px 0 0 1px; }
.tasks button { width: 25px; height: 24px; box-sizing: border-box; border-bottom: 1px solid #828282; background: #d3d3d3; }
.tasks .on { background: #f7f7f7; height: 23px; }
.handle { position: absolute; left: 0; width: 8px; height: 39px; border: 1px solid #828282; border-left: 0; background: #f7f7f7; box-sizing: border-box; }
.triad { position: absolute; left: 13px; bottom: 0; }
.triad svg { margin-left: 22px; }
.triad b { font: 700 12px/16px "Liberation Serif", "Noto Sans CJK TC", serif; display: block; }

.sheets { display: flex; height: 14px; flex: none; border-top: 1px solid #828282; padding-left: 2px; }
.sheets > button { box-sizing: border-box; height: 15px; padding: 0 8px; background: #d3d3d3; border-right: 1px solid #828282; border-bottom: 1px solid #b8b8b8; white-space: nowrap; line-height: 14px; }
.sheets > button:last-child { padding-right: 17px; }
.sheets > .on { background: #f7f7f7; border-bottom: 0; padding: 0 10px 0 13px; }
.nav { display: flex; background: #a9aaac; }
.nav button { width: 16px; border-right: 1px solid #8a8b8d; box-sizing: border-box; }

.fbar { display: flex; align-items: center; height: 33px; flex: none; border-bottom: 1px solid #828282; }
.dots { width: 3px; height: 26px; margin: 0 7px 0 4px; background: repeating-linear-gradient(#aaa 0 2px, transparent 2px 4px); }
.f1 { width: 27px; }
.bar { width: 1px; height: 22px; background: #999; margin-right: 10px; margin-left: 3px; }
.bar.end { height: 31px; margin: 0 0 0 9px; align-self: flex-end; }
.flist { display: flex; gap: 7px; }

.status { display: flex; align-items: center; height: 17px; flex: none; background: #e6e6e6; white-space: nowrap; padding-right: 2px; }
.ed { flex: 1; padding-left: 1px; }
.ed, .mode, .unit { padding-top: 1px; }
.cell { width: 6px; height: 15px; border: 1px solid #d0d0d0; border-width: 0 1px; margin-right: 4px; }
.cell.wide { width: 14px; margin: 0 20px 0 7px; }
.unit { gap: 7px; margin-right: 66px; }
.up { border: 3px solid transparent; border-bottom: 4px solid #333; border-top: 0; }
</style>
